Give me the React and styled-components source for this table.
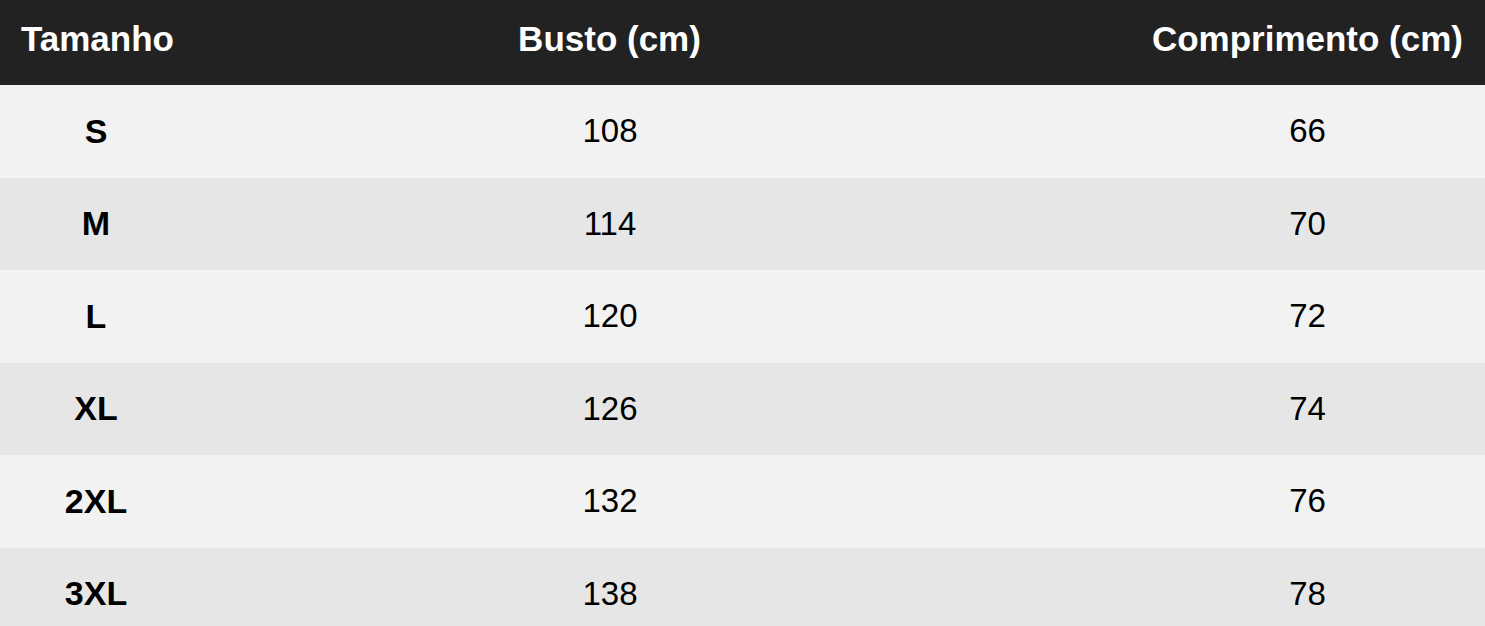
import React from 'react'
import styled, { createGlobalStyle } from 'styled-components'

const sizes = [
  { size: 'S', bust: 108, length: 66 },
  { size: 'M', bust: 114, length: 70 },
  { size: 'L', bust: 120, length: 72 },
  { size: 'XL', bust: 126, length: 74 },
  { size: '2XL', bust: 132, length: 76 },
  { size: '3XL', bust: 138, length: 78 },
]

const GlobalStyle = createGlobalStyle`
  body {
    margin: 0;
    background: #fff;
    font-family: 'Liberation Sans', Arial, sans-serif;
  }
`

const Table = styled.div`
  width: 100%;
  display: grid;
  grid-template-columns: 192px 836px 1fr;
`

const HeadRow = styled.div`
  display: contents;
`

const HeadCell = styled.div`
  box-sizing: border-box;
  background: #222;
  color: #fff;
  height: 85px;
  display: flex;
  align-items: center;
  font-size: 35px;
  font-weight: 700;
  padding: 0 22px 8px 21px;
  white-space: nowrap;
  justify-content: ${({ $align }) => $align || 'center'};
`

const Row = styled.div`
  display: contents;
  & > div {
    background: ${({ $odd }) => ($odd ? '#f2f2f2' : '#e6e6e6')};
  }
`

const Cell = styled.div`
  box-sizing: border-box;
  height: 92.5px;
  display: flex;
  align-items: center;
  justify-content: center;
  font-size: ${({ $bold }) => ($bold ? 34 : 33)}px;
  color: #000;
  font-weight: ${({ $bold }) => ($bold ? 700 : 400)};
  padding-left: ${({ $shift }) => $shift || 0}px;
`

const SizeTable = () => {
  return (
    <>
      <GlobalStyle />
      <Table>
        <HeadRow>
          <HeadCell $align='flex-start'>Tamanho</HeadCell>
          <HeadCell>Busto (cm)</HeadCell>
          <HeadCell $align='flex-end'>Comprimento (cm)</HeadCell>
        </HeadRow>
        {sizes.map(({ size, bust, length }, i) => (
          <Row key={size} $odd={i % 2 === 0}>
            <Cell $bold>{size}</Cell>
            <Cell>{bust}</Cell>
            <Cell $shift={102}>{length}</Cell>
          </Row>
        ))}
      </Table>
    </>
  )
}

export default SizeTable
